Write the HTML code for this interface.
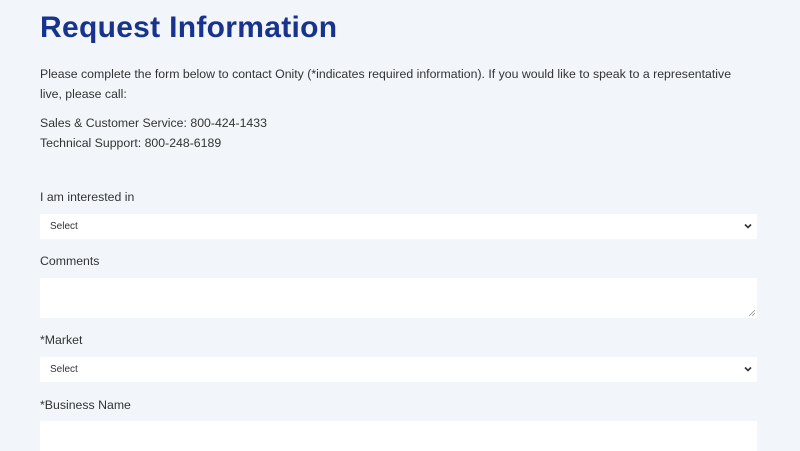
<!DOCTYPE html>
<html><head><style>
body{margin:0;background:#f2f6fa;font-family:"Liberation Sans",sans-serif;color:#333;width:800px;height:447px;overflow:hidden;position:relative}
.a{position:absolute;left:40px;white-space:nowrap}
h1{position:absolute;left:40px;top:11px;margin:0;font-size:30px;color:#17338e;font-weight:bold;letter-spacing:0.3px}
.t{font-size:12.3px;line-height:16px}
.f{position:absolute;left:40px;width:717px;background:#fff}
.s{font-size:10px;color:#333;line-height:25px;padding-left:10px;box-sizing:border-box}
.chev{position:absolute;right:5px;top:9px}
</style></head><body>
<h1>Request Information</h1>
<div class="a t" style="top:66px">Please complete the form below to contact Onity (*indicates required information). If you would like to speak to a representative</div>
<div class="a t" style="top:86px">live, please call:</div>
<div class="a t" style="top:115px">Sales &amp; Customer Service: 800-424-1433</div>
<div class="a t" style="top:135px">Technical Support: 800-248-6189</div>
<div class="a t" style="top:189px">I am interested in</div>
<div class="f s" style="top:214px;height:25px">Select<svg class="chev" width="8" height="6" viewBox="0 0 8 6"><path d="M1 1.5L4 4.5L7 1.5" stroke="#333" stroke-width="1.6" fill="none"/></svg></div>
<div class="a t" style="top:253px">Comments</div>
<div class="f" style="top:278px;height:40px"><svg style="position:absolute;right:2px;bottom:2px" width="6" height="6"><path d="M0 6L6 0M3 6L6 3" stroke="#999" stroke-width="0.8"/></svg></div>
<div class="a t" style="top:332px">*Market</div>
<div class="f s" style="top:357px;height:25px">Select<svg class="chev" width="8" height="6" viewBox="0 0 8 6"><path d="M1 1.5L4 4.5L7 1.5" stroke="#333" stroke-width="1.6" fill="none"/></svg></div>
<div class="a t" style="top:397px">*Business Name</div>
<div class="f" style="top:421px;height:30px"></div>
</body></html>
